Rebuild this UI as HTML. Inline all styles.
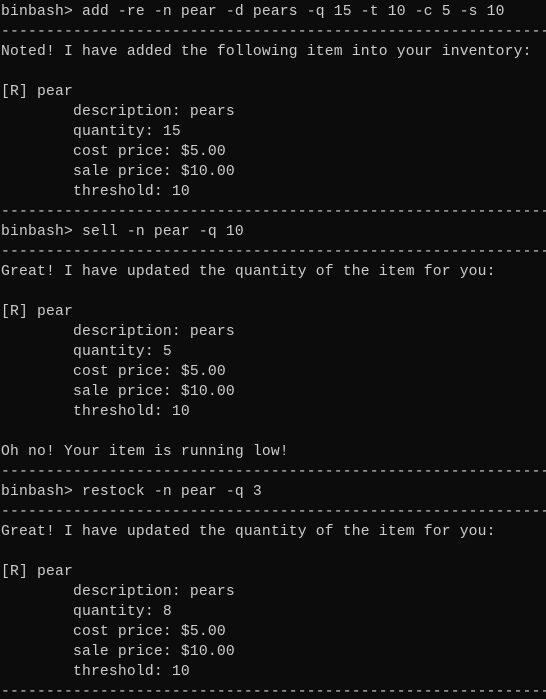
<!DOCTYPE html>
<html><head><meta charset="utf-8"><style>
html,body{margin:0;padding:0;background:#0c0c0c;width:546px;height:699px;overflow:hidden}
pre{margin:0;padding:2px 0 0 1px;font-family:"Liberation Mono",monospace;font-size:14.7px;letter-spacing:0.18px;line-height:20px;color:#cccccc;white-space:pre;tab-size:8}
</style></head><body><pre>binbash&gt; add -re -n pear -d pears -q 15 -t 10 -c 5 -s 10
--------------------------------------------------------------
Noted! I have added the following item into your inventory:

[R] pear
        description: pears
        quantity: 15
        cost price: $5.00
        sale price: $10.00
        threshold: 10
--------------------------------------------------------------
binbash&gt; sell -n pear -q 10
--------------------------------------------------------------
Great! I have updated the quantity of the item for you:

[R] pear
        description: pears
        quantity: 5
        cost price: $5.00
        sale price: $10.00
        threshold: 10

Oh no! Your item is running low!
--------------------------------------------------------------
binbash&gt; restock -n pear -q 3
--------------------------------------------------------------
Great! I have updated the quantity of the item for you:

[R] pear
        description: pears
        quantity: 8
        cost price: $5.00
        sale price: $10.00
        threshold: 10
--------------------------------------------------------------</pre></body></html>
